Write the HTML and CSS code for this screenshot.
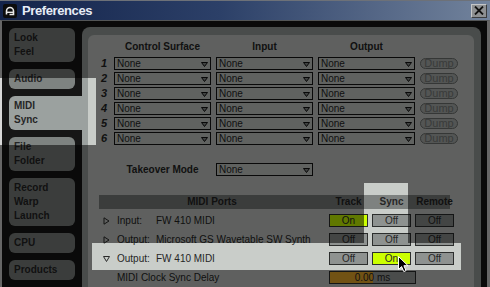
FILE: index.html
```html
<!DOCTYPE html>
<html>
<head>
<meta charset="utf-8">
<title>Preferences</title>
<link rel="stylesheet" href="styles.css">
</head>
<body>
<div class="window">
  <div class="titlebar">
    <svg class="appicon" width="14" height="14" viewBox="0 0 14 14">
      <rect x="0" y="0" width="14" height="14" rx="2" fill="#0c0c0c"/>
      <path d="M3.5 10.5 V7 A3.5 3.5 0 0 1 10.5 7 V10.5 H6.5" fill="none" stroke="#e8e8e8" stroke-width="1.6"/>
      <path d="M4 8.3 H10" stroke="#e8e8e8" stroke-width="1.4"/>
    </svg>
    <span class="title">Preferences</span>
    <div class="close">
      <svg width="10" height="9" viewBox="0 0 10 9"><path d="M1 0.5 L9 8.5 M9 0.5 L1 8.5" stroke="#111" stroke-width="1.8"/></svg>
    </div>
  </div>
  <div class="frame">
    <nav class="sidebar">
      <div class="tab">Look<br>Feel</div>
      <div class="tab">Audio</div>
      <div class="tab selected">MIDI<br>Sync</div>
      <div class="tab">File<br>Folder</div>
      <div class="tab">Record<br>Warp<br>Launch</div>
      <div class="tab">CPU</div>
      <div class="tab">Products</div>
      <div class="tab empty"></div>
    </nav>
    <div class="panel">
      <div class="inner">
        <div class="surfaces">
          <div></div>
          <div class="colhead">Control Surface</div>
          <div class="colhead">Input</div>
          <div class="colhead">Output</div>
          <div></div>

          <div class="num">1</div>
          <div class="dd"><span>None</span><svg class="arr" width="7" height="5" viewBox="0 0 7 5"><path d="M0.5 0.5 H6.5 L3.5 4.5 Z" fill="#8a8e8c" stroke="#111" stroke-width="1"/></svg></div>
          <div class="dd"><span>None</span><svg class="arr" width="7" height="5" viewBox="0 0 7 5"><path d="M0.5 0.5 H6.5 L3.5 4.5 Z" fill="#8a8e8c" stroke="#111" stroke-width="1"/></svg></div>
          <div class="dd"><span>None</span><svg class="arr" width="7" height="5" viewBox="0 0 7 5"><path d="M0.5 0.5 H6.5 L3.5 4.5 Z" fill="#8a8e8c" stroke="#111" stroke-width="1"/></svg></div>
          <div class="dump">Dump</div>

          <div class="num">2</div>
          <div class="dd"><span>None</span><svg class="arr" width="7" height="5" viewBox="0 0 7 5"><path d="M0.5 0.5 H6.5 L3.5 4.5 Z" fill="#8a8e8c" stroke="#111" stroke-width="1"/></svg></div>
          <div class="dd"><span>None</span><svg class="arr" width="7" height="5" viewBox="0 0 7 5"><path d="M0.5 0.5 H6.5 L3.5 4.5 Z" fill="#8a8e8c" stroke="#111" stroke-width="1"/></svg></div>
          <div class="dd"><span>None</span><svg class="arr" width="7" height="5" viewBox="0 0 7 5"><path d="M0.5 0.5 H6.5 L3.5 4.5 Z" fill="#8a8e8c" stroke="#111" stroke-width="1"/></svg></div>
          <div class="dump">Dump</div>

          <div class="num">3</div>
          <div class="dd"><span>None</span><svg class="arr" width="7" height="5" viewBox="0 0 7 5"><path d="M0.5 0.5 H6.5 L3.5 4.5 Z" fill="#8a8e8c" stroke="#111" stroke-width="1"/></svg></div>
          <div class="dd"><span>None</span><svg class="arr" width="7" height="5" viewBox="0 0 7 5"><path d="M0.5 0.5 H6.5 L3.5 4.5 Z" fill="#8a8e8c" stroke="#111" stroke-width="1"/></svg></div>
          <div class="dd"><span>None</span><svg class="arr" width="7" height="5" viewBox="0 0 7 5"><path d="M0.5 0.5 H6.5 L3.5 4.5 Z" fill="#8a8e8c" stroke="#111" stroke-width="1"/></svg></div>
          <div class="dump">Dump</div>

          <div class="num">4</div>
          <div class="dd"><span>None</span><svg class="arr" width="7" height="5" viewBox="0 0 7 5"><path d="M0.5 0.5 H6.5 L3.5 4.5 Z" fill="#8a8e8c" stroke="#111" stroke-width="1"/></svg></div>
          <div class="dd"><span>None</span><svg class="arr" width="7" height="5" viewBox="0 0 7 5"><path d="M0.5 0.5 H6.5 L3.5 4.5 Z" fill="#8a8e8c" stroke="#111" stroke-width="1"/></svg></div>
          <div class="dd"><span>None</span><svg class="arr" width="7" height="5" viewBox="0 0 7 5"><path d="M0.5 0.5 H6.5 L3.5 4.5 Z" fill="#8a8e8c" stroke="#111" stroke-width="1"/></svg></div>
          <div class="dump">Dump</div>

          <div class="num">5</div>
          <div class="dd"><span>None</span><svg class="arr" width="7" height="5" viewBox="0 0 7 5"><path d="M0.5 0.5 H6.5 L3.5 4.5 Z" fill="#8a8e8c" stroke="#111" stroke-width="1"/></svg></div>
          <div class="dd"><span>None</span><svg class="arr" width="7" height="5" viewBox="0 0 7 5"><path d="M0.5 0.5 H6.5 L3.5 4.5 Z" fill="#8a8e8c" stroke="#111" stroke-width="1"/></svg></div>
          <div class="dd"><span>None</span><svg class="arr" width="7" height="5" viewBox="0 0 7 5"><path d="M0.5 0.5 H6.5 L3.5 4.5 Z" fill="#8a8e8c" stroke="#111" stroke-width="1"/></svg></div>
          <div class="dump">Dump</div>

          <div class="num">6</div>
          <div class="dd"><span>None</span><svg class="arr" width="7" height="5" viewBox="0 0 7 5"><path d="M0.5 0.5 H6.5 L3.5 4.5 Z" fill="#8a8e8c" stroke="#111" stroke-width="1"/></svg></div>
          <div class="dd"><span>None</span><svg class="arr" width="7" height="5" viewBox="0 0 7 5"><path d="M0.5 0.5 H6.5 L3.5 4.5 Z" fill="#8a8e8c" stroke="#111" stroke-width="1"/></svg></div>
          <div class="dd"><span>None</span><svg class="arr" width="7" height="5" viewBox="0 0 7 5"><path d="M0.5 0.5 H6.5 L3.5 4.5 Z" fill="#8a8e8c" stroke="#111" stroke-width="1"/></svg></div>
          <div class="dump">Dump</div>
        </div>

        <div class="takeover">
          <div></div>
          <div class="label-bold">Takeover Mode</div>
          <div class="dd"><span>None</span><svg class="arr" width="7" height="5" viewBox="0 0 7 5"><path d="M0.5 0.5 H6.5 L3.5 4.5 Z" fill="#8a8e8c" stroke="#111" stroke-width="1"/></svg></div>
        </div>

        <div class="ports">
          <div class="prow phead">
            <div>MIDI Ports</div>
            <div>Track</div>
            <div>Sync</div>
            <div>Remote</div>
          </div>
          <div class="prow">
            <div class="plabel"><svg class="tri" width="7" height="8" viewBox="0 0 7 8"><path d="M1 0.8 L6 4 L1 7.2 Z" fill="none" stroke="#2a2a2a" stroke-width="1"/></svg><span class="pkind">Input:</span><span>FW 410 MIDI</span></div>
            <div class="btn on">On</div>
            <div class="btn">Off</div>
            <div class="btn">Off</div>
          </div>
          <div class="prow">
            <div class="plabel"><svg class="tri" width="7" height="8" viewBox="0 0 7 8"><path d="M1 0.8 L6 4 L1 7.2 Z" fill="none" stroke="#2a2a2a" stroke-width="1"/></svg><span class="pkind">Output:</span><span>Microsoft GS Wavetable SW Synth</span></div>
            <div class="btn">Off</div>
            <div class="btn">Off</div>
            <div class="btn">Off</div>
          </div>
          <div class="prow">
            <div class="plabel"><svg class="tri" width="7" height="8" viewBox="0 0 7 8"><path d="M0.5 1.5 H6.5 L3.5 6.5 Z" fill="none" stroke="#2a2a2a" stroke-width="1"/></svg><span class="pkind">Output:</span><span>FW 410 MIDI</span></div>
            <div class="btn">Off</div>
            <div class="btn on">On</div>
            <div class="btn">Off</div>
          </div>
          <div class="prow">
            <div class="plabel sub">MIDI Clock Sync Delay</div>
            <div class="delay">0.00 ms</div>
          </div>
        </div>
      </div>
    </div>
  </div>

  <svg class="dim" width="490" height="287" viewBox="0 0 490 287">
    <path fill-rule="evenodd" fill="rgba(0,0,0,0.53)" d="M0 20 H490 V287 H0 Z M0 78 H96 V145 H0 Z M364 183 H408 V243 H364 Z M92 243 H461 V270 H92 Z"/>
  </svg>

  <svg class="cursor" width="11" height="17" viewBox="0 0 11 17">
    <path d="M0.5 0.5 V13.5 L3.6 10.6 L5.8 15.6 L8 14.6 L5.9 9.7 H10 Z" fill="#000" stroke="#fff" stroke-width="1"/>
  </svg>
</div>
</body>
</html>
```

FILE: styles.css
```css
html, body {
  margin: 0;
  padding: 0;
}

body {
  width: 490px;
  height: 287px;
  overflow: hidden;
  background: #000;
  font-family: "Liberation Sans", Arial, sans-serif;
  color: #262626;
}

.window {
  position: relative;
  width: 490px;
  height: 287px;
  display: flex;
  flex-direction: column;
  overflow: hidden;
}

/* Title bar */
.titlebar {
  flex: none;
  height: 19px;
  border-top: 1px solid #6d7178;
  display: flex;
  align-items: center;
  padding: 0 3px;
  background: linear-gradient(to right, #13234a 0%, #2c4068 45%, #72839c 100%);
}

.appicon {
  flex: none;
  display: block;
}

.title {
  margin-left: 5px;
  font-size: 13px;
  font-weight: bold;
  letter-spacing: -0.4px;
  color: #e6ecf6;
  flex: 1;
}

.close {
  flex: none;
  width: 16px;
  height: 14px;
  box-sizing: border-box;
  background: #8e9092;
  border-top: 1px solid #c4c6c8;
  border-left: 1px solid #c4c6c8;
  border-right: 1px solid #3a3c3e;
  border-bottom: 1px solid #3a3c3e;
  display: flex;
  align-items: center;
  justify-content: center;
}

/* Window body */
.frame {
  flex: 1;
  display: flex;
  background: #161616;
  border-top: 1px solid #b0b4b8;
  border-left: 2px solid #d8d8d8;
  border-right: 3px solid #d8d8d8;
  padding-top: 6px;
  min-height: 0;
}

.sidebar {
  flex: none;
  width: 80px;
  padding-top: 1px;
  display: flex;
  flex-direction: column;
  gap: 7px;
}

.tab {
  flex: none;
  margin-left: 7px;
  width: 66px;
  box-sizing: border-box;
  padding: 3px 5px;
  line-height: 14px;
  font-size: 10px;
  font-weight: bold;
  color: #262626;
  background: #7e8381;
  border-radius: 6px;
}

.tab.empty {
  height: 20px;
}

.tab.selected {
  width: 73px;
  border-radius: 6px 0 0 6px;
  background: #9ba19f;
}

.panel {
  flex: 1;
  display: flex;
  margin-right: 6px;
  padding: 8px 7px 0 6px;
  background: #9ba19f;
  border-radius: 8px 8px 0 0;
}

.inner {
  flex: 1;
  background: #c9cdc9;
  border-radius: 6px 6px 0 0;
  padding-top: 5px;
  font-size: 10px;
}

/* Control surfaces grid */
.surfaces,
.takeover {
  display: grid;
  grid-template-columns: 21px 97px 97px 97px 38px;
  column-gap: 5px;
}

.surfaces {
  grid-template-rows: 15px repeat(6, 13px);
  row-gap: 2px;
}

.takeover {
  margin-top: 18px;
  grid-template-rows: 13px;
}

.colhead,
.label-bold {
  font-weight: bold;
  text-align: center;
  line-height: 13px;
  font-size: 10px;
}

.num {
  font-weight: bold;
  font-style: italic;
  font-size: 11px;
  line-height: 13px;
  text-align: right;
  padding-right: 2px;
}

.dd {
  box-sizing: border-box;
  height: 13px;
  border: 1px solid #141414;
  background: #cdd1cd;
  display: flex;
  align-items: center;
  justify-content: space-between;
  padding: 0 2px 0 2px;
  line-height: 11px;
}

.arr {
  display: block;
  flex: none;
  margin-top: 1px;
}

.dump {
  box-sizing: border-box;
  height: 11px;
  margin-top: 1px;
  border: 1px solid #727674;
  border-radius: 6px;
  background: #b0b4b2;
  color: #7a7e7c;
  font-size: 11px;
  line-height: 9px;
  text-align: center;
}

/* MIDI ports */
.ports {
  margin-top: 19px;
  margin-left: 11px;
}

.prow {
  display: grid;
  grid-template-columns: 226px 39px 39px 39px;
  column-gap: 4px;
  width: 351px;
  height: 19px;
  align-items: center;
}

.phead {
  height: 14px;
  margin-bottom: 2px;
  background: #7e8280;
  font-weight: bold;
  text-align: center;
  line-height: 14px;
}

.plabel {
  display: flex;
  align-items: center;
  padding-left: 4px;
  white-space: nowrap;
}

.plabel.sub {
  padding-left: 18px;
}

.tri {
  display: block;
  flex: none;
}

.pkind {
  margin-left: 7px;
  width: 39px;
  flex: none;
}

.btn {
  box-sizing: border-box;
  height: 13px;
  border: 1px solid #2c2e2d;
  background: #8e9290;
  text-align: center;
  line-height: 11px;
}

.btn.on {
  background: #ccff00;
}

.delay {
  grid-column: 2 / 5;
  justify-self: start;
  box-sizing: border-box;
  width: 87px;
  height: 13px;
  border: 1px solid #2c2e2d;
  background: linear-gradient(to right, #f0ae2c 0, #f0ae2c 43px, #9ea2a0 43px);
  text-align: center;
  line-height: 11px;
}

/* Overlays */
.dim {
  position: absolute;
  left: 0;
  top: 0;
  pointer-events: none;
}

.cursor {
  position: absolute;
  left: 398px;
  top: 256px;
  pointer-events: none;
}
```
